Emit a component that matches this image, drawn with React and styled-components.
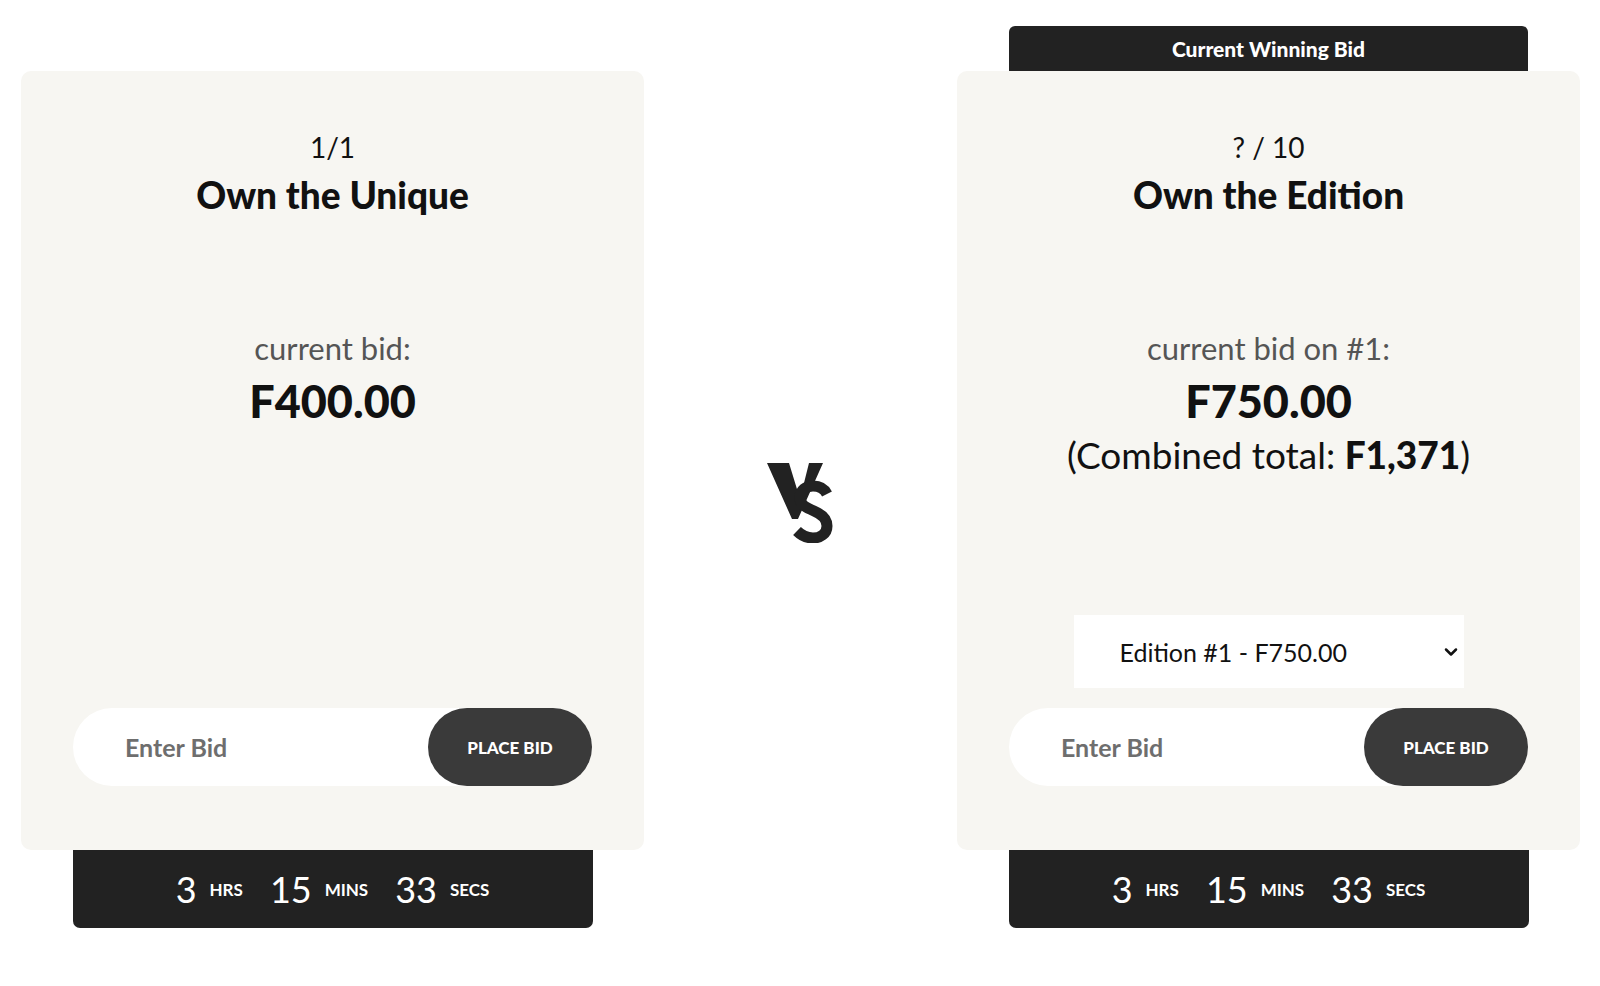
import styled, { createGlobalStyle } from 'styled-components'
import { ChevronDown } from 'lucide-react'

const GlobalStyle = createGlobalStyle`
  html, body {
    margin: 0;
    padding: 0;
    background: #fff;
  }
  body {
    font-family: Lato, "Noto Sans", sans-serif;
    color: #111;
  }
  * {
    box-sizing: border-box;
  }
`

const Page = styled.div`
  display: flex;
  align-items: flex-start;
  width: 1600px;
  height: 986px;
  padding: 26px 20px 0 21px;
`

const Column = styled.div`
  display: flex;
  flex-direction: column;
  align-items: center;
  width: 623px;
  padding-top: ${props => props.$hasTab ? 0 : 45}px;
`

const Middle = styled.div`
  flex: 1;
  display: flex;
  align-items: center;
  justify-content: center;
  height: 902px;
  padding-top: 45px;
`

const Tab = styled.div`
  display: flex;
  align-items: center;
  justify-content: center;
  width: 519px;
  height: 45px;
  background-color: #222;
  border-radius: 6px 6px 0 0;
  color: #fff;
  font-size: 21px;
  font-weight: 900;
`

const Card = styled.div`
  display: flex;
  flex-direction: column;
  align-items: center;
  width: 623px;
  height: 779px;
  padding: 59px 52px 64px;
  background-color: #f7f6f2;
  border-radius: 10px;
  text-align: center;
`

const Edition = styled.div`
  font-size: 28px;
  line-height: 34px;
`

const Title = styled.h2`
  margin: 9px 0 0;
  font-size: 37px;
  line-height: 44px;
  font-weight: 900;
`

const BidLabel = styled.div`
  margin-top: 111px;
  font-size: 31px;
  line-height: 40px;
  color: #555;
`

const BidAmount = styled.div`
  margin-top: 6px;
  font-size: 45px;
  line-height: 54px;
  font-weight: 900;
`

const Combined = styled.div`
  margin-top: 5px;
  font-size: 37px;
  line-height: 44px;

  b {
    font-weight: 900;
  }
`

const Bottom = styled.div`
  display: flex;
  flex-direction: column;
  align-items: center;
  gap: 20px;
  width: 100%;
  margin-top: auto;
`

const SelectWrap = styled.div`
  position: relative;
  width: 390px;
  height: 73px;
  background-color: #fff;

  svg {
    position: absolute;
    right: 3px;
    top: 27px;
    pointer-events: none;
  }
`

const Select = styled.select`
  width: 100%;
  height: 100%;
  padding: 0 0 0 46px;
  border: none;
  background: transparent;
  appearance: none;
  font-family: Lato, sans-serif;
  font-size: 25px;
  color: #111;
  outline: none;
`

const BidForm = styled.form`
  display: flex;
  width: 100%;
  height: 78px;
  background-color: #fff;
  border-radius: 39px;
`

const BidInput = styled.input`
  flex: 1;
  min-width: 0;
  padding-left: 52px;
  border: none;
  background: transparent;
  font-family: Lato, sans-serif;
  font-size: 25px;
  font-weight: 700;
  outline: none;

  &::placeholder {
    color: #6e6e6e;
  }
`

const BidButton = styled.button`
  width: 164px;
  border: none;
  border-radius: 39px;
  background-color: #3a3a3a;
  color: #fff;
  font-family: Lato, sans-serif;
  font-size: 17px;
  font-weight: 900;
  cursor: pointer;
`

const Timer = styled.div`
  display: flex;
  align-items: center;
  justify-content: center;
  gap: 27px;
  width: 520px;
  height: 78px;
  background-color: #222;
  border-radius: 0 0 7px 7px;
  color: #fff;
`

const TimeGroup = styled.div`
  display: flex;
  align-items: center;
  gap: 13px;
`

const TimeNum = styled.span`
  font-size: 36px;
  line-height: 40px;
`

const TimeUnit = styled.span`
  font-size: 17px;
  font-weight: 700;
  text-transform: uppercase;
`

const VsLogo = () => (
  <svg width="72" height="86" viewBox="0 0 72 86">
    <polygon points="2,6 24,6 35,42 44,6 58,6 33,62 27,62" fill="#222" />
    <path
      d="M62 37 C59 31, 53 29, 48 29 C41 29, 35 33, 35 41 C35 48, 42 51, 49 54 C56 57, 62 61, 62 69 C62 77, 55 81, 48 81 C42 81, 37 79, 32 74"
      fill="none"
      stroke="#222"
      strokeWidth="11"
    />
  </svg>
)

const Countdown = () => (
  <Timer>
    <TimeGroup><TimeNum>3</TimeNum><TimeUnit>hrs</TimeUnit></TimeGroup>
    <TimeGroup><TimeNum>15</TimeNum><TimeUnit>mins</TimeUnit></TimeGroup>
    <TimeGroup><TimeNum>33</TimeNum><TimeUnit>secs</TimeUnit></TimeGroup>
  </Timer>
)

const PlaceBid = () => (
  <BidForm onSubmit={e => e.preventDefault()}>
    <BidInput placeholder="Enter Bid" />
    <BidButton type="submit">PLACE BID</BidButton>
  </BidForm>
)

export default function App() {
  return (
    <>
      <GlobalStyle />
      <Page>
        <Column>
          <Card>
            <Edition>1/1</Edition>
            <Title>Own the Unique</Title>
            <BidLabel>current bid:</BidLabel>
            <BidAmount>F400.00</BidAmount>
            <Bottom>
              <PlaceBid />
            </Bottom>
          </Card>
          <Countdown />
        </Column>

        <Middle>
          <VsLogo />
        </Middle>

        <Column $hasTab>
          <Tab>Current Winning Bid</Tab>
          <Card>
            <Edition>? / 10</Edition>
            <Title>Own the Edition</Title>
            <BidLabel>current bid on #1:</BidLabel>
            <BidAmount>F750.00</BidAmount>
            <Combined>(Combined total: <b>F1,371</b>)</Combined>
            <Bottom>
              <SelectWrap>
                <Select defaultValue="1">
                  <option value="1">Edition #1 - F750.00</option>
                </Select>
                <ChevronDown size={20} strokeWidth={3} />
              </SelectWrap>
              <PlaceBid />
            </Bottom>
          </Card>
          <Countdown />
        </Column>
      </Page>
    </>
  )
}
